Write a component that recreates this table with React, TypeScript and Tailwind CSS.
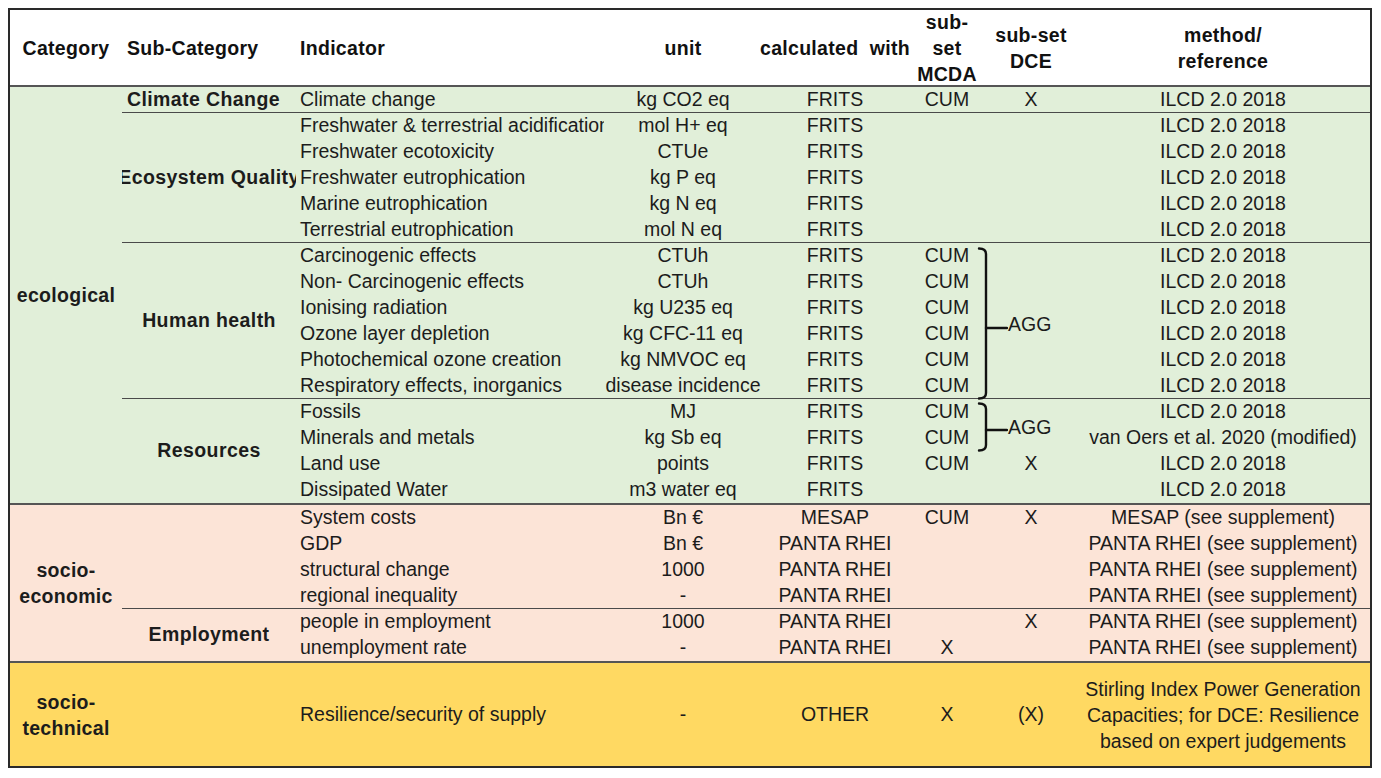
import React from 'react'

// ─── Data ────────────────────────────────────────────────────────────────────

type Row = {
  ind: string
  unit: string
  calc: string
  mcda?: string
  dce?: string
  ref: string
}

const ILCD = 'ILCD 2.0 2018'
const PANTA = 'PANTA RHEI (see supplement)'

const climate: Row[] = [
  { ind: 'Climate change', unit: 'kg CO2 eq', calc: 'FRITS', mcda: 'CUM', dce: 'X', ref: ILCD },
]

const ecosystem: Row[] = [
  { ind: 'Freshwater & terrestrial acidification', unit: 'mol H+ eq', calc: 'FRITS', ref: ILCD },
  { ind: 'Freshwater ecotoxicity', unit: 'CTUe', calc: 'FRITS', ref: ILCD },
  { ind: 'Freshwater eutrophication', unit: 'kg P eq', calc: 'FRITS', ref: ILCD },
  { ind: 'Marine eutrophication', unit: 'kg N eq', calc: 'FRITS', ref: ILCD },
  { ind: 'Terrestrial eutrophication', unit: 'mol N eq', calc: 'FRITS', ref: ILCD },
]

const health: Row[] = [
  { ind: 'Carcinogenic effects', unit: 'CTUh', calc: 'FRITS', mcda: 'CUM', ref: ILCD },
  { ind: 'Non- Carcinogenic effects', unit: 'CTUh', calc: 'FRITS', mcda: 'CUM', ref: ILCD },
  { ind: 'Ionising radiation', unit: 'kg U235 eq', calc: 'FRITS', mcda: 'CUM', ref: ILCD },
  { ind: 'Ozone layer depletion', unit: 'kg CFC-11 eq', calc: 'FRITS', mcda: 'CUM', ref: ILCD },
  { ind: 'Photochemical ozone creation', unit: 'kg NMVOC eq', calc: 'FRITS', mcda: 'CUM', ref: ILCD },
  { ind: 'Respiratory effects, inorganics', unit: 'disease incidence', calc: 'FRITS', mcda: 'CUM', ref: ILCD },
]

const resources: Row[] = [
  { ind: 'Fossils', unit: 'MJ', calc: 'FRITS', mcda: 'CUM', ref: ILCD },
  { ind: 'Minerals and metals', unit: 'kg Sb eq', calc: 'FRITS', mcda: 'CUM', ref: 'van Oers et al. 2020 (modified)' },
  { ind: 'Land use', unit: 'points', calc: 'FRITS', mcda: 'CUM', dce: 'X', ref: ILCD },
  { ind: 'Dissipated Water', unit: 'm3 water eq', calc: 'FRITS', ref: ILCD },
]

const economy: Row[] = [
  { ind: 'System costs', unit: 'Bn €', calc: 'MESAP', mcda: 'CUM', dce: 'X', ref: 'MESAP (see supplement)' },
  { ind: 'GDP', unit: 'Bn €', calc: 'PANTA RHEI', ref: PANTA },
  { ind: 'structural change', unit: '1000', calc: 'PANTA RHEI', ref: PANTA },
  { ind: 'regional inequality', unit: '-', calc: 'PANTA RHEI', ref: PANTA },
]

const employment: Row[] = [
  { ind: 'people in employment', unit: '1000', calc: 'PANTA RHEI', dce: 'X', ref: PANTA },
  { ind: 'unemployment rate', unit: '-', calc: 'PANTA RHEI', mcda: 'X', ref: PANTA },
]

// ─── Pieces ──────────────────────────────────────────────────────────────────

function Center({ className, children }: { className: string; children?: React.ReactNode }) {
  return (
    <div className={`flex shrink-0 items-center justify-center whitespace-nowrap ${className}`}>{children}</div>
  )
}

function DataRow({ r }: { r: Row }) {
  return (
    <div className="flex h-[26px] shrink-0 items-center">
      <div className="w-[308px] shrink-0 overflow-hidden whitespace-nowrap pl-[4px]">{r.ind}</div>
      <Center className="w-[158px]">{r.unit}</Center>
      <Center className="w-[146px]">{r.calc}</Center>
      <Center className="w-[78px]">{r.mcda}</Center>
      <Center className="w-[90px]">{r.dce}</Center>
      <Center className="w-[294px]">{r.ref}</Center>
    </div>
  )
}

function Group({
  label,
  rows,
  height,
  last,
  left,
  children,
}: {
  label?: string
  rows: Row[]
  height: string
  last?: boolean
  left?: boolean
  children?: React.ReactNode
}) {
  return (
    <div className={`flex shrink-0 ${height} ${last ? '' : 'border-b border-[#4a4a4a]'}`}>
      <div
        className={`flex w-[174px] shrink-0 items-center overflow-hidden whitespace-nowrap font-bold tracking-[0.4px] ${
          left ? 'justify-start pl-[5px]' : 'justify-center'
        }`}
      >
        {label}
      </div>
      <div className="relative flex flex-col">
        {rows.map((r) => (
          <DataRow key={r.ind} r={r} />
        ))}
        {children}
      </div>
    </div>
  )
}

function Bracket({ top, height, tick }: { top: number; height: number; tick: number }) {
  return (
    <svg
      className="absolute left-[680px]"
      style={{ top }}
      width={32}
      height={height + 2}
      viewBox={`0 0 32 ${height + 2}`}
      fill="none"
      stroke="#111"
      strokeWidth={2.4}
      strokeLinecap="round"
    >
      <path d={`M3 1.5 Q10 1.5 10 7 L10 ${height - 5} Q10 ${height + 0.5} 3 ${height + 0.5}`} />
      <path d={`M10 ${tick} L31 ${tick}`} />
    </svg>
  )
}

function Category({ children }: { children: React.ReactNode }) {
  return (
    <div className="flex w-[112px] shrink-0 items-center justify-center text-center font-bold leading-[26px] tracking-[0.3px]">
      {children}
    </div>
  )
}

// ─── App ─────────────────────────────────────────────────────────────────────

export default function App() {
  return (
    <div className="min-h-[778px] w-[1381px] bg-white p-2">
      <div className="flex h-[760px] w-[1364px] flex-col border-2 border-[#2a2a2a] font-['Liberation_Sans',Arial,sans-serif] text-[19.5px] text-[#1c1c1c]">
        {/* Header */}
        <div className="flex h-[77px] shrink-0 border-b-2 border-[#555] bg-white font-bold leading-[26px] tracking-[0.3px] text-[#111]">
          <Center className="w-[112px]">Category</Center>
          <div className="flex w-[174px] shrink-0 items-center pl-[5px]">Sub-Category</div>
          <div className="flex w-[308px] shrink-0 items-center pl-[4px]">Indicator</div>
          <Center className="w-[158px]">unit</Center>
          <Center className="w-[146px] whitespace-pre">{'calculated  with'}</Center>
          <Center className="w-[78px] flex-col text-center">
            <span>sub-</span>
            <span>set</span>
            <span>MCDA</span>
          </Center>
          <Center className="w-[90px] flex-col text-center">
            <span>sub-set</span>
            <span>DCE</span>
          </Center>
          <Center className="w-[294px] flex-col text-center">
            <span>method/</span>
            <span>reference</span>
          </Center>
        </div>

        {/* ecological */}
        <div className="flex h-[418px] shrink-0 border-b-2 border-[#555] bg-[#e1efd9]">
          <Category>ecological</Category>
          <div className="flex flex-col">
            <Group label="Climate Change" rows={climate} height="h-[26px]" left />
            <Group label="Ecosystem Quality" rows={ecosystem} height="h-[130px]" />
            <Group label="Human health" rows={health} height="h-[156px]">
              <Bracket top={4} height={151} tick={81} />
              <span className="absolute left-[712px] top-[68px] leading-[26px]">AGG</span>
            </Group>
            <Group label="Resources" rows={resources} height="h-[104px]" last>
              <Bracket top={3} height={48} tick={28} />
              <span className="absolute left-[712px] top-[15px] leading-[26px]">AGG</span>
            </Group>
          </div>
        </div>

        {/* socio-economic */}
        <div className="flex h-[158px] shrink-0 border-b-2 border-[#555] bg-[#fce4d7]">
          <Category>
            socio-
            <br />
            economic
          </Category>
          <div className="flex flex-col">
            <Group rows={economy} height="h-[104px]" />
            <Group label="Employment" rows={employment} height="h-[52px]" last />
          </div>
        </div>

        {/* socio-technical */}
        <div className="flex flex-1 items-center bg-[#ffd962]">
          <Category>
            socio-
            <br />
            technical
          </Category>
          <div className="w-[174px] shrink-0" />
          <div className="w-[308px] shrink-0 whitespace-nowrap pl-[4px]">Resilience/security of supply</div>
          <Center className="w-[158px]">-</Center>
          <Center className="w-[146px]">OTHER</Center>
          <Center className="w-[78px]">X</Center>
          <Center className="w-[90px]">(X)</Center>
          <Center className="w-[294px] flex-col text-center leading-[26px]">
            <span>Stirling Index Power Generation</span>
            <span>Capacities; for DCE: Resilience</span>
            <span>based on expert judgements</span>
          </Center>
        </div>
      </div>
    </div>
  )
}
